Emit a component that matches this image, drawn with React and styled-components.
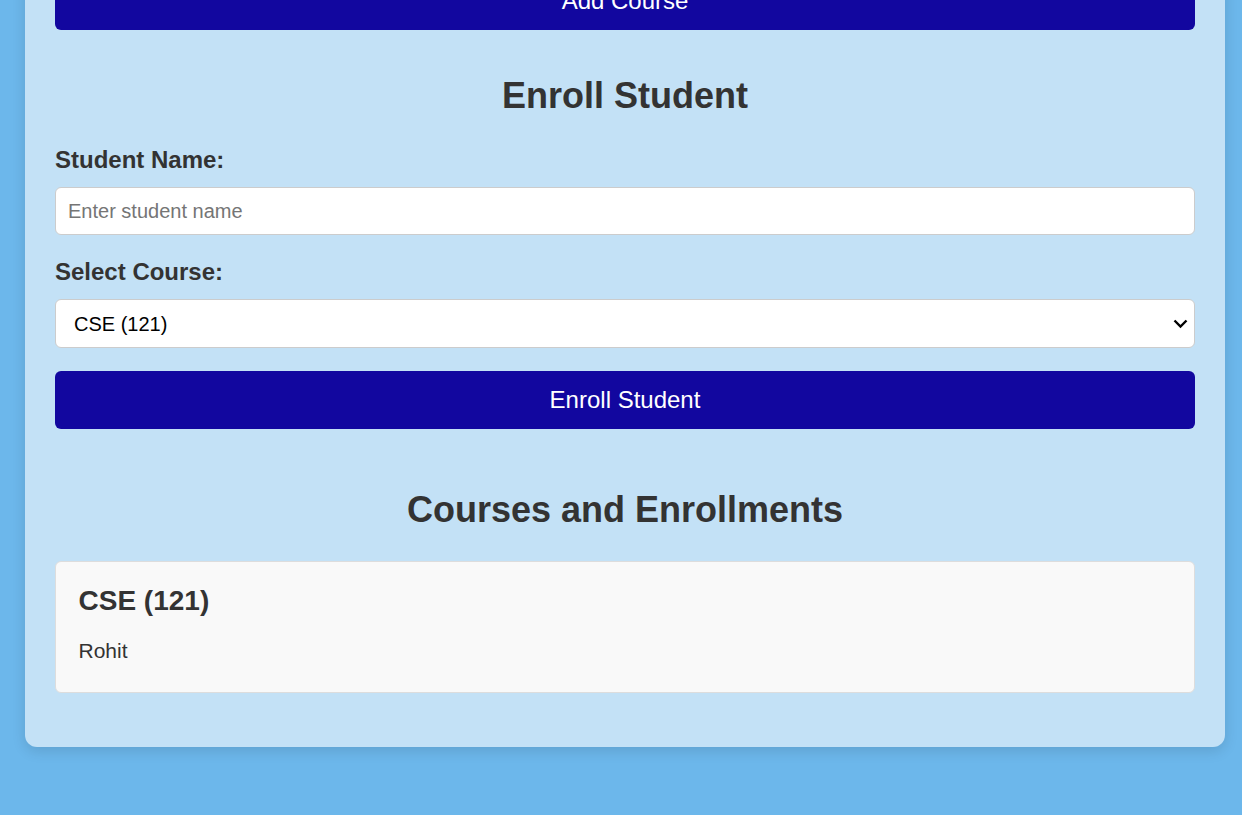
import React, { useState } from "react";
import styled, { createGlobalStyle } from "styled-components";

const GlobalStyle = createGlobalStyle`
  html, body {
    margin: 0;
    padding: 0;
    background: #6cb7eb;
    font-family: "Liberation Sans", Arial, sans-serif;
    color: #333;
  }
  body {
    min-height: 815px;
    overflow: hidden;
  }
  * { box-sizing: border-box; }
`;

const Page = styled.div`
  width: 1242px;
  min-height: 815px;
  overflow: hidden;
`;

const Container = styled.div`
  width: 1200px;
  margin: -58px 0 0 25px;
  padding: 30px 30px 0;
  background: #c3e1f6;
  border-radius: 12px;
  box-shadow: 0 4px 14px rgba(0, 0, 0, 0.12);
`;

const Section = styled.section`
  margin-top: ${(p) => p.$top || 0}px;
`;

const Heading = styled.h2`
  margin: 0 0 ${(p) => p.$bottom || 30}px;
  font-size: 36px;
  line-height: 41px;
  font-weight: 700;
  text-align: center;
  color: #333;
`;

const Label = styled.label`
  display: block;
  font-size: 24px;
  line-height: 28px;
  font-weight: 700;
  color: #333;
  margin-bottom: 13px;
`;

const TextInput = styled.input`
  display: block;
  width: 100%;
  height: 48px;
  padding: 0 12px;
  border: 1px solid #ccc;
  border-radius: 6px;
  background: #fff;
  font-family: "Liberation Sans", Arial, sans-serif;
  font-size: 20px;
  color: #000;
  margin-bottom: 23px;
  outline: none;
  &::placeholder {
    color: #757575;
  }
`;

const SelectWrap = styled.div`
  position: relative;
  margin-bottom: 22.5px;
`;

const Select = styled.select`
  display: block;
  width: 100%;
  height: 49px;
  padding: 0 30px 0 18px;
  border: 1px solid #ccc;
  border-radius: 6px;
  background: #fff;
  font-family: "Liberation Sans", Arial, sans-serif;
  font-size: 20px;
  color: #000;
  outline: none;
  appearance: none;
  -webkit-appearance: none;
`;

const Chevron = styled.svg`
  position: absolute;
  right: 7px;
  top: 50%;
  width: 15px;
  height: 10px;
  margin-top: -4.5px;
  pointer-events: none;
`;

const Button = styled.button`
  display: block;
  width: 100%;
  height: 58px;
  border: none;
  border-radius: 6px;
  background: #12079f;
  color: #fff;
  font-family: "Liberation Sans", Arial, sans-serif;
  font-size: 24px;
  cursor: pointer;
`;

const CourseList = styled.div`
  display: flex;
  flex-direction: column;
  gap: 20px;
  padding-bottom: 53.5px;
`;

const CourseCard = styled.div`
  background: #f9f9f9;
  border: 1px solid #ddd;
  border-radius: 6px;
  padding: 22.5px;
`;

const CourseTitle = styled.h3`
  margin: 0 0 22px;
  font-size: 28px;
  line-height: 32px;
  font-weight: 700;
  color: #333;
`;

const StudentName = styled.p`
  margin: 0 0 7px;
  font-size: 21px;
  line-height: 24px;
  color: #333;
`;

export default function App() {
  const [name, setName] = useState("");
  const courses = [{ name: "CSE", code: "121", students: ["Rohit"] }];

  return (
    <Page>
      <GlobalStyle />
      <Container>
        <Button type="button">Add Course</Button>

        <Section $top={45}>
          <Heading>Enroll Student</Heading>
          <Label htmlFor="student">Student Name:</Label>
          <TextInput
            id="student"
            placeholder="Enter student name"
            value={name}
            onChange={(e) => setName(e.target.value)}
          />
          <Label htmlFor="course">Select Course:</Label>
          <SelectWrap>
            <Select id="course" defaultValue="121">
              {courses.map((c) => (
                <option key={c.code} value={c.code}>
                  {c.name} ({c.code})
                </option>
              ))}
            </Select>
            <Chevron viewBox="0 0 15 10" aria-hidden="true">
              <path
                d="M1.5 1.5 L7.5 7.5 L13.5 1.5"
                fill="none"
                stroke="#000"
                strokeWidth="2.4"
              />
            </Chevron>
          </SelectWrap>
          <Button type="button">Enroll Student</Button>
        </Section>

        <Section $top={60.5}>
          <Heading $bottom={31}>Courses and Enrollments</Heading>
          <CourseList>
            {courses.map((c) => (
              <CourseCard key={c.code}>
                <CourseTitle>
                  {c.name} ({c.code})
                </CourseTitle>
                {c.students.map((s) => (
                  <StudentName key={s}>{s}</StudentName>
                ))}
              </CourseCard>
            ))}
          </CourseList>
        </Section>
      </Container>
    </Page>
  );
}
